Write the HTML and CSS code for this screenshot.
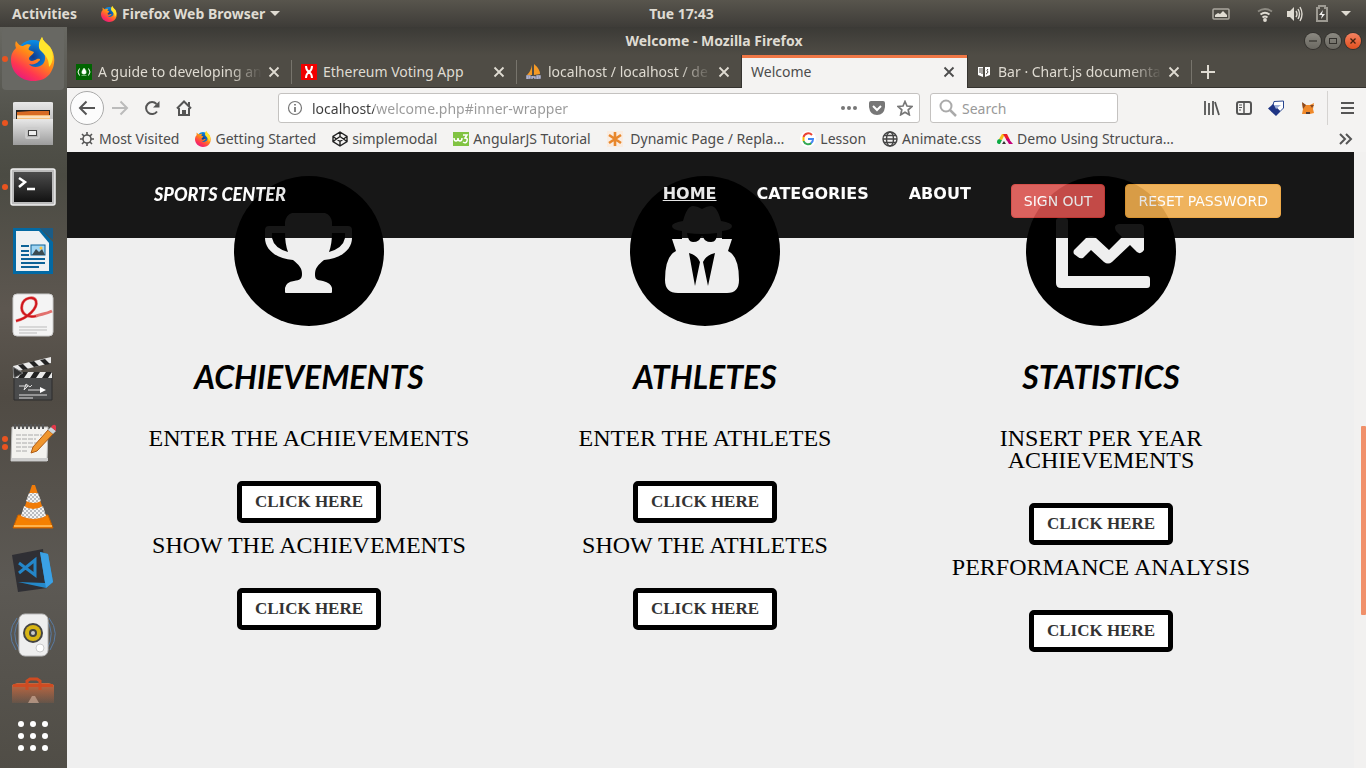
FILE: index.html
```html
<!DOCTYPE html>
<html lang="en">
<head>
<meta charset="utf-8">
<title>Welcome</title>
<link rel="stylesheet" href="styles.css">
</head>
<body>
<svg class="defs" aria-hidden="true">
  <defs>
    <linearGradient id="fxBody" x1="0.8" y1="0" x2="0.2" y2="1"><stop offset="0" stop-color="#ffe226"/><stop offset=".45" stop-color="#ff8a16"/><stop offset=".75" stop-color="#ff3750"/><stop offset="1" stop-color="#e31587"/></linearGradient>
    <radialGradient id="fxGlobe"><stop offset="0" stop-color="#123a8c"/><stop offset="1" stop-color="#0a8fe8"/></radialGradient>
    <linearGradient id="silver" x1="0" y1="0" x2="0" y2="1"><stop offset="0" stop-color="#e8e8e8"/><stop offset="1" stop-color="#9c9c9c"/></linearGradient>
    <linearGradient id="dark" x1="0" y1="0" x2="0" y2="1"><stop offset="0" stop-color="#4c4c4c"/><stop offset="1" stop-color="#121212"/></linearGradient>
    <linearGradient id="bag" x1="0" y1="0" x2="0" y2="1"><stop offset="0" stop-color="#c2673f"/><stop offset="1" stop-color="#c2673f" stop-opacity=".15"/></linearGradient>
    <pattern id="check" width="4" height="4" patternUnits="userSpaceOnUse"><rect width="4" height="4" fill="#f4f4f4"/><path d="M0 0h2v2H0zM2 2h2v2H2z" fill="#b9bcc0"/></pattern>
    <symbol id="firefox" viewBox="0 0 44 44">
      <circle cx="22" cy="20" r="17" fill="url(#fxGlobe)"/>
      <path d="M5 4c2 3 4 5 7 5 3-2 6-2 8-1-2 2-3 4-2 5l5 2c-1 3-5 4-5 7 1 3 5 2 8 0 3-1 4 1 2 2-2 3-7 4-10 3 3 4 10 4 14 0 4-5 2-12-3-15C26 7 30 2 31 0c1 4 4 6 8 10 5 6 6 17 1 25-4 7-11 9-18 9C10 44 0 35 0 23c0-6 2-9 5-12-1-2-1-5 0-7z" fill="url(#fxBody)"/>
      <path d="M29 13C26 8 30 2 31 0c1 4 4 6 8 10 4 6 4 15-1 20 0-9-4-12-9-17z" fill="#ffe52e"/>
    </symbol>
    <symbol id="close" viewBox="0 0 12 12"><path d="M1.500 1.500l9 9M10.500 1.500l-9 9" fill="none" stroke="currentColor" stroke-width="1.800"/></symbol>
  </defs>
</svg>

<header class="topbar">
  <div class="topbar-left">
    <button class="plain">Activities</button>
    <button class="plain app-menu"><svg width="16" height="16"><use href="#firefox"/></svg>Firefox Web Browser<svg width="10" height="5"><path d="M0 0h10L5 5z" fill="#dfdbd2"/></svg></button>
  </div>
  <button class="plain">Tue 17:43</button>
  <div class="tray">
    <svg class="tray-picture" width="18" height="12"><rect x="1" y="1" width="16" height="10" rx="1" fill="none" stroke="#aaa79f" stroke-width="1.500"/><path d="M3 9V7l3-2 2 1 3-3 4 4v2z" fill="#dfdbd2"/></svg>
    <svg width="16" height="16" fill="none" stroke="#dfdbd2" stroke-width="1.800"><path d="M1 5.500q7-5 14 0" stroke="#8d8a82"/><path d="M3.500 8.500q4.500-3.500 9 0M5.500 11.500q2.500-2 5 0"/><circle cx="8" cy="14" r="1" fill="#dfdbd2"/></svg>
    <svg width="17" height="16"><path d="M1 5h3l4-4v14l-4-4H1z" fill="#dfdbd2"/><path d="M10 5q2 3 0 6M12 3q3 5 0 10M14 1q4 7 0 14" fill="none" stroke="#dfdbd2" stroke-width="1.400"/></svg>
    <svg width="12" height="17"><path d="M1 3h2V1h6v2h2v13H1z" fill="none" stroke="#9d9a92" stroke-width="2"/><path d="M7 5L3 10h3l-1 4 4-5H6z" fill="#f2f1f0"/></svg>
    <svg width="10" height="5"><path d="M0 0h10L5 5z" fill="#dfdbd2"/></svg>
  </div>
</header>

<div class="desktop">
<nav class="dock" aria-label="Launcher">
  <button class="dock-item active running" aria-label="Firefox"><svg width="44" height="44"><use href="#firefox"/></svg></button>
  <button class="dock-item running" aria-label="Files"><svg width="44" height="44"><path d="M2 2q0-1 2-1h36q2 0 2 1v35H2z" fill="url(#silver)"/><path d="M5 9h34v11H5z" fill="#222"/><path d="M6 11l14-1h18v9H6z" fill="#d86b24"/><path d="M6 14h33v5H6z" fill="#f8c07a"/><path d="M6 16h33" stroke="#fff"/><path d="M2 18h40v26H2z" fill="url(#silver)"/><rect x="15" y="27" width="13" height="10" rx="1" fill="none" stroke="#ccc" stroke-width="2"/><rect x="17.500" y="29.500" width="8" height="5" fill="#eee" stroke="#444"/></svg></button>
  <button class="dock-item running" aria-label="Terminal"><svg width="46" height="40"><rect x="1" y="2" width="44" height="36" rx="2" fill="#bbb" stroke="#eee" stroke-width="1.500"/><rect x="4" y="5" width="38" height="30" fill="url(#dark)"/><path d="M9 11l6 4-6 5M17 22h8" fill="none" stroke="#fff" stroke-width="2.500"/></svg></button>
  <button class="dock-item" aria-label="LibreOffice Writer"><svg width="42" height="48"><path d="M1 1h27l13 14v32H1z" fill="#0369a3"/><path d="M28 1h13v12z" fill="#1b5c86"/><path d="M4 4h23l10 12v28H4z" fill="#eef1f3"/><path d="M9 19h8M9 24h8M9 28h8M9 32h24M9 36h24M9 40h18" stroke="#0c6297" stroke-width="2"/><rect x="19" y="18" width="14" height="10" fill="#9fd4f2" stroke="#0c6297"/><path d="M20 28l4-6 3 3 3-3 3 6z" fill="#3c4b50"/><circle cx="29" cy="21" r="1.500" fill="#ffc33c"/></svg></button>
  <button class="dock-item" aria-label="Document Viewer"><svg width="42" height="44"><rect x="1" y="1" width="40" height="42" rx="4" fill="#f4f4f4" stroke="#ccc"/><path d="M4 28C16 25 26 15 24 8c-2-5-12-4-14 4-2 9 6 13 14 11 6-2 10-2 16-5" fill="none" stroke="#e2716e" stroke-width="3"/><path d="M4 28C16 25 26 15 24 8c-2-5-12-4-14 4-2 9 6 13 14 11" fill="none" stroke="#cf151c" stroke-width="1.800"/><path d="M7 34h28M7 37h28M7 40h18" stroke="#bbb"/></svg></button>
  <button class="dock-item" aria-label="Videos"><svg width="42" height="46"><path d="M2 18h38v26H2z" fill="#4a4b4c" stroke="#2c2c2c"/><path d="M1 10L39 1v6L2 16z" fill="#e9e9e9"/><path d="M1 16h39v6H1z" fill="#e9e9e9"/><path d="M6 9l5 5 5-1-5-5zM17 6l5 5 5-1-5-5zM28 4l5 5 5-1-5-5zM6 22l4-6h6l-4 6zM18 22l4-6h6l-4 6zM30 22l4-6h6l-4 6z" fill="#222"/><path d="M1 11l10 6-9 5z" fill="#333" stroke="#777"/><path d="M7 30h9l-4 4 2-6 4 3 2-2M16 34h12M7 39h28M7 42h14" fill="none" stroke="#ddd"/><path d="M28 31l6 3-6 3z" fill="#fff"/></svg></button>
  <button class="dock-item running twice" aria-label="Text Editor"><svg width="46" height="42"><path d="M2 5h36l-1 34H1z" fill="#f3f2ef" stroke="#bbb"/><path d="M1 36h37v3H1z" fill="#ccc"/><path d="M5 7V2M9 7V2M13 7V2M17 7V2M21 7V2M25 7V2M29 7V2M33 7V2" stroke="#555" stroke-width="2"/><path d="M6 13h26M6 17h20M6 21h22M6 25h18M6 29h12" stroke="#aaa" stroke-dasharray="5 1"/><path d="M21 31l2-6L38 8l5 4-16 17z" fill="#f0962d" stroke="#ae5b13"/><path d="M38 8l3-3 5 4-3 3z" fill="#cdd5da"/><path d="M41 5q3-4 5-1t0 5z" fill="#e2394a"/></svg></button>
  <button class="dock-item" aria-label="VLC"><svg width="42" height="46"><path d="M6 31h30l5 13H1z" fill="#f58000" stroke="#c55f00"/><path d="M20 1h3l11 33q-12 8-25 0z" fill="#f07c0a"/><path d="M17 9h9l3 8q-7 4-15 0z" fill="url(#check)"/><path d="M12 22q9 6 19 0l3 10q-12 6-25 0z" fill="url(#check)"/><path d="M2 42h38" stroke="#ffb24a" stroke-width="2"/></svg></button>
  <button class="dock-item" aria-label="Visual Studio Code"><svg width="44" height="46"><path d="M1 7l31-6 4 39-29 4z" fill="#2f2f34"/><path d="M29 4l8 2 5 28-7 6-28-6 27 1z" fill="#2489ca"/><path d="M29 4l8 2 5 28-7 6z" fill="#3ba1e5"/><path d="M8 15l16 12V12L8 25" fill="none" stroke="#2486c8" stroke-width="3"/></svg></button>
  <button class="dock-item" aria-label="Rhythmbox"><svg width="48" height="44"><path d="M8 5Q-4 20 7 37M12 4Q0 20 11 38M40 5q12 15 1 32M36 4q12 16 1 34" fill="none" stroke="#587ba4"/><rect x="10" y="1" width="29" height="42" rx="6" fill="#eee" stroke="#bbb"/><circle cx="24" cy="20" r="10" fill="#444"/><circle cx="24" cy="20" r="8" fill="#d8b514"/><circle cx="24" cy="20" r="4" fill="#444"/><circle cx="24" cy="20" r="2" fill="#ccc"/><circle cx="31" cy="35" r="4" fill="#fff" stroke="#ccc"/></svg></button>
  <button class="dock-item software" aria-label="Ubuntu Software"><svg width="42" height="27"><path d="M0 8l5-2h32l5 2v18H0z" fill="url(#bag)"/><path d="M1 7h40v3H1z" fill="#cf4c22"/><path d="M15 13V4l3-2h7l3 2v9" fill="none" stroke="#ce4b22" stroke-width="3"/><path d="M16 26l4-7h3l4 7z" fill="#d9b8a4" opacity=".6"/></svg></button>
  <button class="dock-item apps" aria-label="Show Applications"><svg width="32" height="32" fill="#fff"><circle cx="4" cy="4" r="3"/><circle cx="16" cy="4" r="3"/><circle cx="28" cy="4" r="3"/><circle cx="4" cy="16" r="3"/><circle cx="16" cy="16" r="3"/><circle cx="28" cy="16" r="3"/><circle cx="4" cy="28" r="3"/><circle cx="16" cy="28" r="3"/><circle cx="28" cy="28" r="3"/></svg></button>
</nav>

<div class="window">
  <div class="titlebar">
    <span></span><span>Welcome - Mozilla Firefox</span>
    <div class="window-buttons">
      <button aria-label="Minimize"><svg width="8" height="8"><path d="M0 4h8" stroke="#33312d" stroke-width="1.200"/></svg></button>
      <button aria-label="Maximize"><svg width="8" height="8"><rect x=".5" y="1.500" width="7" height="5" fill="none" stroke="#33312d"/></svg></button>
      <button class="close-window" aria-label="Close"><svg width="8" height="8"><path d="M1.500 1.500l5 5M6.500 1.500l-5 5" stroke="#42210f" stroke-width="1.300"/></svg></button>
    </div>
  </div>

  <div class="tabs">
    <div class="tab"><svg width="16" height="16"><rect width="16" height="16" fill="#006400"/><path d="M3.500 4.500q-3 3.500 0 7M12.500 4.500q3 3.500 0 7" fill="none" stroke="#fff"/><path d="M8 4q3 3 2 5.500-2 1.500-4 0-1-2 2-5.500zM5.500 11.500h5" fill="#fff" stroke="#cfc" stroke-width=".5"/></svg><button class="tab-title fade">A guide to developing an</button><button class="tab-close" aria-label="Close tab"><svg width="12" height="12"><use href="#close"/></svg></button></div>
    <div class="tab"><svg width="16" height="16"><rect width="16" height="16" fill="#f00000"/><path d="M5 2q0 4 3 6-3 2-3 6M11 2q0 4-3 6 3 2 3 6" fill="none" stroke="#fff" stroke-width="2"/></svg><button class="tab-title">Ethereum Voting App</button><button class="tab-close" aria-label="Close tab"><svg width="12" height="12"><use href="#close"/></svg></button></div>
    <div class="tab"><svg width="16" height="16"><path d="M6 1v10H1Q5 7 6 1zM8 0q6 5 6 10l-6 1z" fill="#f59a26"/><path d="M1 15v-3h3v2H1M6 12v3m0-2h3v2M11 15v-3h3v2h-3" fill="none" stroke="#b8bbdb" stroke-width="1.400"/></svg><button class="tab-title fade">localhost / localhost / de</button><button class="tab-close" aria-label="Close tab"><svg width="12" height="12"><use href="#close"/></svg></button></div>
    <div class="tab current"><button class="tab-title">Welcome</button><button class="tab-close" aria-label="Close tab"><svg width="12" height="12"><use href="#close"/></svg></button></div>
    <div class="tab"><svg width="16" height="16"><path d="M2 3h5v10l-5-2zM9 3h5v8l-5 2z" fill="#fff"/><path d="M4 4v5M12 5q-2 1 0 3-1 2-2 2M6 4v6" fill="none" stroke="#4c4943"/></svg><button class="tab-title fade">Bar · Chart.js documenta</button><button class="tab-close" aria-label="Close tab"><svg width="12" height="12"><use href="#close"/></svg></button></div>
    <button class="new-tab" aria-label="New tab"><svg width="14" height="14"><path d="M7 0v14M0 7h14" stroke="#dfdbd2" stroke-width="2"/></svg></button>
  </div>

  <div class="toolbar">
    <button class="back" aria-label="Back"><svg width="18" height="16"><path d="M17 8H2M8.500 1.500L2 8l6.500 6.500" fill="none" stroke="#555" stroke-width="2"/></svg></button>
    <button class="tool" aria-label="Forward"><svg width="18" height="16"><path d="M1 8h15M9.500 1.500L16 8l-6.500 6.500" fill="none" stroke="#bbb" stroke-width="2"/></svg></button>
    <button class="tool" aria-label="Reload"><svg width="16" height="16"><path d="M13 11.500A6 6 0 1 1 12.500 4" fill="none" stroke="#555" stroke-width="2"/><path d="M15.500 1v6.500H9z" fill="#555"/></svg></button>
    <button class="tool" aria-label="Home"><svg width="16" height="16"><path d="M1 8.500L8 1.500l7 7M3 8v7h10V8" fill="none" stroke="#555" stroke-width="2"/><path d="M6 10h4v5H6zM12 2h2v4h-2z" fill="#555"/></svg></button>
    <div class="field url">
      <svg width="16" height="16"><circle cx="8" cy="8" r="6.500" fill="none" stroke="#777" stroke-width="1.200"/><path d="M8 7v5M8 4v1.500" stroke="#777" stroke-width="1.800"/></svg>
      <input type="text" class="url-input" aria-label="Address" value="localhost/welcome.php#inner-wrapper">
      <button class="mini" aria-label="Page actions"><svg width="16" height="4" fill="#777"><circle cx="2" cy="2" r="2"/><circle cx="8" cy="2" r="2"/><circle cx="14" cy="2" r="2"/></svg></button>
      <button class="mini" aria-label="Save to Pocket"><svg width="16" height="16"><path d="M2 1h12q2 0 2 2v4q-1 8-8 8T0 7V3q0-2 2-2z" fill="#777"/><path d="M4 6l4 4 4-4" fill="none" stroke="#fff" stroke-width="2"/></svg></button>
      <button class="mini" aria-label="Bookmark this page"><svg width="16" height="16"><path d="M8 1.500l2 4.500 5 .5-3.800 3.300 1.100 5L8 12.200l-4.300 2.600 1.100-5L1 6.500 6 6z" fill="none" stroke="#777" stroke-width="1.700"/></svg></button>
    </div>
    <div class="field search">
      <svg width="18" height="18"><circle cx="7" cy="7" r="5.500" fill="none" stroke="#aaa" stroke-width="2"/><path d="M11 11l6 6" stroke="#aaa" stroke-width="2.500"/></svg>
      <input type="text" aria-label="Search" placeholder="Search">
    </div>
    <button class="tool" aria-label="Library"><svg width="16" height="16"><path d="M1 1v14M5 3v12M9 1v14M11 2l4 13" stroke="#555" stroke-width="1.800"/></svg></button>
    <button class="tool" aria-label="Sidebars"><svg width="16" height="14"><rect x="1" y="1" width="14" height="12" rx="2" fill="none" stroke="#555" stroke-width="2"/><path d="M8 1v12" stroke="#555" stroke-width="1.500"/><path d="M3 4h3M3 6.500h3M3 9h2" stroke="#555"/></svg></button>
    <button class="tool" aria-label="Mist"><svg width="17" height="17"><path d="M6 1.500L15.500 1v7L12 11.500 5 5z" fill="#fff" stroke="#27458f"/><path d="M5 4l7.500 7.500L8 16 0 8.500z" fill="#1f3585"/><path d="M6 5h7L8 9z" fill="#9fb0d8"/></svg></button>
    <button class="tool" aria-label="MetaMask"><svg width="14" height="14"><path d="M1 2l4 2h4l4-2-1 6 1 4-4 1H4l-3 0 1-5z" fill="#f0892a"/><path d="M1 1l4 3-3 4zM9 4h4l-2 3z" fill="#8a4a22"/><path d="M5 11h4v2H5z" fill="#553d35"/></svg></button>
    <button class="tool menu" aria-label="Menu"><svg width="13" height="14"><path d="M0 2h13M0 7h13M0 12h13" stroke="#555" stroke-width="2"/></svg></button>
  </div>

  <div class="bookmarks">
    <a href="#"><svg width="16" height="16"><circle cx="8" cy="8" r="4" fill="none" stroke="#555" stroke-width="1.600"/><path d="M8 1v3M8 12v3M1 8h3M12 8h3M3 3l2 2M11 11l2 2M13 3l-2 2M5 11l-2 2" stroke="#555" stroke-width="1.600"/></svg>Most Visited</a>
    <a href="#"><svg width="16" height="16"><use href="#firefox"/></svg>Getting Started</a>
    <a href="#"><svg width="16" height="16"><path d="M8 1l7 4.500v5L8 15l-7-4.500v-5zM1 5.500l7 5 7-5M1 10.500l7-5 7 5M8 1v4.500M8 10.500V15" fill="none" stroke="#222" stroke-width="1.400"/></svg>simplemodal</a>
    <a href="#"><svg width="16" height="16"><path d="M0 1h16v14H0z" fill="#81c342"/><path d="M1 7q0 3 2 3t2-3q0 3 2 3t2-3M10 4h4l-2 3q3 0 2 3t-4 1" fill="none" stroke="#fff" stroke-width="1.500"/></svg>AngularJS Tutorial</a>
    <a href="#"><svg width="16" height="16"><path d="M0 0h16v16H0z" fill="#faece0"/><path d="M8 1v14M2 4l12 8M14 4L2 12" stroke="#e8872c" stroke-width="2.600"/></svg>&nbsp;Dynamic Page / Repla…</a>
    <a href="#"><svg width="16" height="16"><circle cx="8" cy="8" r="8" fill="#fff"/><path d="M12 4A5 5 0 0 0 3.500 6" fill="none" stroke="#ea4335" stroke-width="2"/><path d="M3.500 6v4" stroke="#fbbc05" stroke-width="2"/><path d="M3.500 10a5 5 0 0 0 8 2" fill="none" stroke="#34a853" stroke-width="2"/><path d="M8 8h5q0 3-2 4" fill="none" stroke="#4285f4" stroke-width="2"/></svg>Lesson</a>
    <a href="#"><svg width="16" height="16" fill="none" stroke="#444" stroke-width="1.400"><circle cx="8" cy="8" r="7"/><ellipse cx="8" cy="8" rx="3.500" ry="7"/><path d="M1 8h14M2 4.500h12M2 11.500h12"/></svg>Animate.css</a>
    <a href="#"><svg width="16" height="16"><path d="M0 11q0-3 3-3l2 1-2 4q-3 0-3-2z" fill="#0bab44"/><path d="M2 8l3-5h3L5 9z" fill="#f6bd16"/><path d="M6 3h4l3 6-3 1z" fill="#ed1c24"/><path d="M9 8l2-1 5 6h-4z" fill="#c4007a"/><path d="M5 13l2-3 2 3z" fill="#333"/></svg>Demo Using Structura…</a>
    <button class="overflow" aria-label="More bookmarks"><svg width="14" height="12"><path d="M1 1l5 5-5 5M7 1l5 5-5 5" fill="none" stroke="#555" stroke-width="2"/></svg></button>
  </div>

  <div class="viewport">
    <div class="page">
      <nav class="site-nav">
        <a class="brand" href="#">SPORTS CENTER</a>
        <div class="links">
          <a class="here" href="#">HOME</a>
          <a href="#">CATEGORIES</a>
          <a href="#">ABOUT</a>
        </div>
        <div class="account">
          <button class="btn danger">SIGN OUT</button>
          <button class="btn warning">RESET PASSWORD</button>
        </div>
      </nav>
      <main class="cards">
        <section class="card">
          <svg class="badge" viewBox="0 0 150 150"><circle cx="75" cy="75" r="75"/><path fill="#efefef" d="M58 37h33q6 2 7 9v4h16q4 0 4 4v8c0 12-12 21-28 22-6 5-9 8-9 14 0 5 1 6 8 7q8 2 9 7v4q0 1-1 1H52q-1 0-1-1v-4q1-6 9-7c6-1 8-2 8-7 0-6-3-9-9-14-16-1-28-10-28-22v-8q0-4 4-4h16v-4q1-7 7-9z"/><path d="M38 57h13q0 11 3 19-14-4-16-14zM98 57h13v5q-2 10-16 14 3-8 3-19z"/></svg>
          <h2>ACHIEVEMENTS</h2>
          <p>ENTER THE ACHIEVEMENTS</p>
          <button class="action">CLICK HERE</button>
          <p class="next">SHOW THE ACHIEVEMENTS</p>
          <button class="action">CLICK HERE</button>
        </section>
        <section class="card">
          <svg class="badge" viewBox="0 0 150 150"><circle cx="75" cy="75" r="75"/><path fill="#efefef" d="M53 45q4-15 10-15 4 0 9 3 5-3 9-3 6 0 10 15 11 2 11 5 0 4-10 5v8h10l-4 12q11 5 11 29 0 13-12 13H48q-13 0-13-13 0-24 11-29l-4-12h10v-8q-10-1-10-5 0-3 11-5z"/><path d="M57 57q15 2 30 0c0 6-2 9-6 9q-7 0-8-6h-2q-1 6-8 6-5 0-6-9zM59 77q8 2 11 9l-5 24zM85 77q-9 2-12 9l5 24z"/></svg>
          <h2>ATHLETES</h2>
          <p>ENTER THE ATHLETES</p>
          <button class="action">CLICK HERE</button>
          <p class="next">SHOW THE ATHLETES</p>
          <button class="action">CLICK HERE</button>
        </section>
        <section class="card">
          <svg class="badge" viewBox="0 0 150 150"><circle cx="75" cy="75" r="75"/><g fill="#efefef"><path d="M33 42h6q3 0 3 3v55h79q3 0 3 3v6q0 3-3 3H35q-5 0-5-5V45q0-3 3-3z"/><path d="M48 74l12-12q5-4 10 0l13 12 13-13-6-6q-3-6 3-7h21q4 0 4 4v22q-3 5-7 2l-7-7-18 17q-4 3-8 0L65 74l-8 8q-3 1-5-1l-4-3q-1-2 0-4z"/></g></svg>
          <h2>STATISTICS</h2>
          <p>INSERT PER YEAR ACHIEVEMENTS</p>
          <button class="action">CLICK HERE</button>
          <p class="next">PERFORMANCE ANALYSIS</p>
          <button class="action">CLICK HERE</button>
        </section>
      </main>
    </div>
    <div class="scrollbar"><div class="thumb"></div></div>
  </div>
</div>
</div>
</body>
</html>
```
FILE: styles.css
```css
* { box-sizing: border-box; }
body {
  margin: 0;
  min-height: 100vh;
  display: flex;
  flex-direction: column;
  font: 14px/20px "Noto Sans", sans-serif;
  color: #4c4c4c;
  background: #efefef;
  overflow: hidden;
}
button, input { font: inherit; color: inherit; border: 0; padding: 0; background: none; }
a { color: inherit; text-decoration: none; }
svg { flex: none; display: block; }
.defs { position: absolute; width: 0; height: 0; }

.topbar {
  display: grid;
  grid-template-columns: 1fr auto 1fr;
  align-items: center;
  height: 27px;
  padding: 0 15px 0 12px;
  color: #dfdbd2;
  font-weight: 700;
  background: linear-gradient(#58554d, #3e3c38);
}
.topbar-left, .app-menu, .tray { display: flex; align-items: center; }
.topbar-left { gap: 24px; }
.app-menu { gap: 5px; }
.tray { justify-content: flex-end; gap: 13px; }
.tray-picture { margin-right: 14px; }

.desktop { flex: 1; display: flex; min-height: 0; }
.dock {
  width: 67px;
  flex: none;
  display: flex;
  flex-direction: column;
  gap: 2px;
  padding: 1px 3px 0 2px;
  background: linear-gradient(#686862, #53534c 12%, #4b4b43 20%, #5d5750 38%, #504b44 50%, #5c5954 75%, #504d46);
}
.dock-item {
  position: relative;
  flex: none;
  height: 62px;
  display: flex;
  align-items: center;
  justify-content: center;
  border-radius: 4px;
}
.dock-item.active { background: #686863; }
.dock-item.software { height: 44px; }
.dock-item.apps { height: 44px; }
.running::before {
  content: "";
  position: absolute;
  left: 0;
  top: 28px;
  width: 6px;
  height: 6px;
  border-radius: 3px;
  background: #e95420;
}
.twice::before { top: 24px; box-shadow: 0 8px #e95420; }

.window { flex: 1; min-width: 0; display: flex; flex-direction: column; }
.titlebar {
  display: grid;
  grid-template-columns: 1fr auto 1fr;
  align-items: center;
  height: 28px;
  padding-right: 5px;
  color: #dfdbd2;
  font-weight: 700;
  background: linear-gradient(#3b3a36, #4f4c45);
}
.window-buttons { display: flex; justify-content: flex-end; gap: 4px; }
.window-buttons button {
  width: 16px;
  height: 16px;
  display: grid;
  place-items: center;
  border-radius: 8px;
  background: linear-gradient(#8b8981, #6a6861);
  box-shadow: 0 0 0 1px #34322e;
}
.window-buttons .close-window { background: linear-gradient(#f48261, #e1501f); }

.tabs { display: flex; height: 33px; background: #4f4c45; color: #dfdbd2; box-shadow: inset 0 -1px #35332f; }
.tab {
  position: relative;
  width: 225px;
  display: flex;
  align-items: center;
  gap: 6px;
  padding: 0 12px 0 9px;
}
.tab:not(.current)::after {
  content: "";
  position: absolute;
  right: 0;
  top: 5px;
  width: 1px;
  height: 24px;
  background: #77746c;
}
.tab:nth-child(3)::after { display: none; }
.tab-title { flex: 1; min-width: 0; white-space: nowrap; text-align: left; }
.fade {
  -webkit-mask-image: linear-gradient(to right, #000 80%, transparent);
  mask-image: linear-gradient(to right, #000 80%, transparent);
}
.tab-close { flex: none; }
.current { color: #4c4c4c; background: #f4f3f2; box-shadow: inset 0 3px #f07746, 0 0 0 1px #35332f; clip-path: inset(0 -1px 0 -1px); }
.new-tab { padding: 0 9px; }

.toolbar { display: flex; align-items: center; height: 40px; padding-left: 3px; background: #f4f3f2; }
.back {
  width: 34px;
  height: 34px;
  display: grid;
  place-items: center;
  border: 1px solid #aaa;
  border-radius: 17px;
  background: #fcfcfc;
}
.tool { width: 32px; height: 34px; display: grid; place-items: center; }
.menu { width: 39px; margin-left: 3px; border-left: 1px solid #d5d3d1; }
.field {
  display: flex;
  align-items: center;
  height: 30px;
  border: 1px solid #c4c2c0;
  border-radius: 3px;
  background: #fff;
}
.field input { flex: 1; min-width: 0; outline: 0; padding-top: 1px; }
.url { flex: 1; gap: 12px; margin: 0 10px 0 78px; padding: 0 6px 0 8px; }
.url .url-input {
  margin-left: -3px;
  color: transparent;
  background: linear-gradient(to right, #3c3c3c 62px, #999 62px);
  -webkit-background-clip: text;
  background-clip: text;
}
.search { width: 188px; gap: 5px; margin-right: 78px; padding: 0 8px; }
.search input::placeholder { color: #999; opacity: 1; }

.bookmarks {
  display: flex;
  align-items: center;
  gap: 16px;
  height: 24px;
  padding: 0 13px 2px 12px;
  white-space: nowrap;
  background: #f4f3f2;
}
.bookmarks a { display: flex; align-items: center; gap: 4px; }
.overflow { margin-left: auto; }

.viewport { flex: 1; min-height: 0; display: flex; background: #f2f1f0; }
.page { position: relative; flex: 1; min-width: 0; background: #efefef; color: #000; }
.scrollbar { width: 12px; display: flex; justify-content: flex-end; }
.thumb { width: 5px; height: 189px; margin-top: 274px; border-radius: 1px; background: #f0906a; }

.site-nav {
  position: absolute;
  top: 0;
  left: 0;
  right: 0;
  display: flex;
  align-items: flex-start;
  gap: 40px;
  height: 86px;
  padding: 30px 73px 0 87px;
  color: #fff;
  background: #000;
  opacity: .9;
}
.brand { margin-right: auto; font: italic 900 18px/24px Lato, sans-serif; }
.links { display: flex; gap: 40px; font: 700 16px/24px "DejaVu Sans", sans-serif; }
.here { text-decoration: underline; }
.account { display: flex; gap: 20px; padding-top: 2px; }
.btn {
  height: 34px;
  padding: 0 12px;
  font: 14px/20px "DejaVu Sans", sans-serif;
  border: 1px solid;
  border-radius: 4px;
}
.danger { background: #d9534f; border-color: #d43f3a; color: #fff; }
.warning { background: #f0ad4e; border-color: #eea236; color: #fff; }

.cards { display: grid; grid-template-columns: repeat(3, 1fr); padding: 24px 55px 0 44px; }
.card { display: flex; flex-direction: column; align-items: center; padding: 0 15px; text-align: center; }
.badge { width: 150px; height: 150px; }
.card h2 { margin: 31px 0 30px; font: italic 700 32px/40px Lato, sans-serif; }
.card p { margin: 0 0 32px; font: 24px/22px "Liberation Serif", serif; }
.card .next { margin-top: 11px; }
.action {
  width: 144px;
  height: 42px;
  border: 5px solid #000;
  border-radius: 5px;
  color: #333;
  background: #fff;
  font: 700 17px/24px "Liberation Serif", serif;
  white-space: nowrap;
}
```
